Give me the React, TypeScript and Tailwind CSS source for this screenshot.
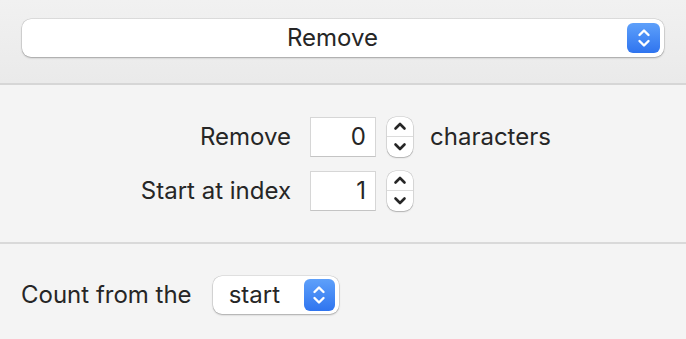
import React from 'react';

const font = { fontFamily: 'Inter, "Noto Sans", sans-serif' };

function BlueArrows({ className }: { className: string }) {
  return (
    <div className={`flex items-center justify-center rounded-[6px] bg-gradient-to-b from-[#5ea0fa] to-[#2f74ef] ${className}`}>
      <svg width="14" height="22" viewBox="0 0 14 22" fill="none" stroke="white" strokeWidth="2.4" strokeLinecap="round" strokeLinejoin="round">
        <path d="M2.5 8 L7 3.5 L11.5 8" />
        <path d="M2.5 14 L7 18.5 L11.5 14" />
      </svg>
    </div>
  );
}

function Stepper() {
  return (
    <div className="flex h-[40px] w-[26px] flex-col overflow-hidden rounded-[9px] bg-white shadow-[0_0_0_0.5px_rgba(0,0,0,0.18),0_1px_1.5px_rgba(0,0,0,0.2)]">
      <div className="flex flex-1 items-center justify-center border-b border-[#dcdcdc]">
        <svg width="14" height="10" viewBox="0 0 14 10" fill="none" stroke="#262626" strokeWidth="2.6" strokeLinecap="round" strokeLinejoin="round">
          <path d="M2.5 7.5 L7 3 L11.5 7.5" />
        </svg>
      </div>
      <div className="flex flex-1 items-center justify-center">
        <svg width="14" height="10" viewBox="0 0 14 10" fill="none" stroke="#262626" strokeWidth="2.6" strokeLinecap="round" strokeLinejoin="round">
          <path d="M2.5 2.5 L7 7 L11.5 2.5" />
        </svg>
      </div>
    </div>
  );
}

function NumberField({ value }: { value: string }) {
  return (
    <div className="flex h-[40px] w-[66px] shrink-0 items-center justify-end border border-[#d6d6d6] border-b-[#c4c4c4] bg-white pr-[9px]">
      {value}
    </div>
  );
}

export default function App() {
  return (
    <div className="flex h-[339px] w-[686px] flex-col bg-[#f4f4f4] text-[24px] text-[#262626]" style={font}>
      {/* Action popup */}
      <section className="h-[83px] bg-gradient-to-b from-[#f1f1f1] to-[#eaeaea] px-[22px] pt-[19px]">
        <div className="flex h-[38px] items-center rounded-[9px] bg-white pr-[4px] shadow-[0_0_0_0.5px_rgba(0,0,0,0.15),0_1px_2px_rgba(0,0,0,0.25)]">
          <span className="flex-1 pl-[16px] text-center">Remove</span>
          <BlueArrows className="h-[30px] w-[33px]" />
        </div>
      </section>
      <div className="h-[2px] bg-[#d6d6d6]" />

      {/* Options */}
      <section className="flex h-[157px] flex-col justify-center">
        <div className="grid grid-cols-[291px_auto] items-center gap-y-[14px]">
          <span className="text-right">Remove</span>
          <div className="ml-[19px] flex items-center">
            <NumberField value="0" />
            <div className="ml-[11px]"><Stepper /></div>
            <span className="ml-[17px]">characters</span>
          </div>
          <span className="text-right">Start at index</span>
          <div className="ml-[19px] flex items-center">
            <NumberField value="1" />
            <div className="ml-[11px]"><Stepper /></div>
          </div>
        </div>
      </section>
      <div className="h-[1.5px] bg-[#d9d9d9]" />

      {/* Count from */}
      <section className="flex flex-1 items-center gap-[21px] px-[21px] pt-[8px]">
        <span>Count from the</span>
        <div className="flex h-[38px] w-[126px] items-center rounded-[9px] bg-white pr-[4px] shadow-[0_0_0_0.5px_rgba(0,0,0,0.15),0_1px_2px_rgba(0,0,0,0.25)]">
          <span className="flex-1 pl-[16px]">start</span>
          <BlueArrows className="h-[32px] w-[31px]" />
        </div>
      </section>
    </div>
  );
}
